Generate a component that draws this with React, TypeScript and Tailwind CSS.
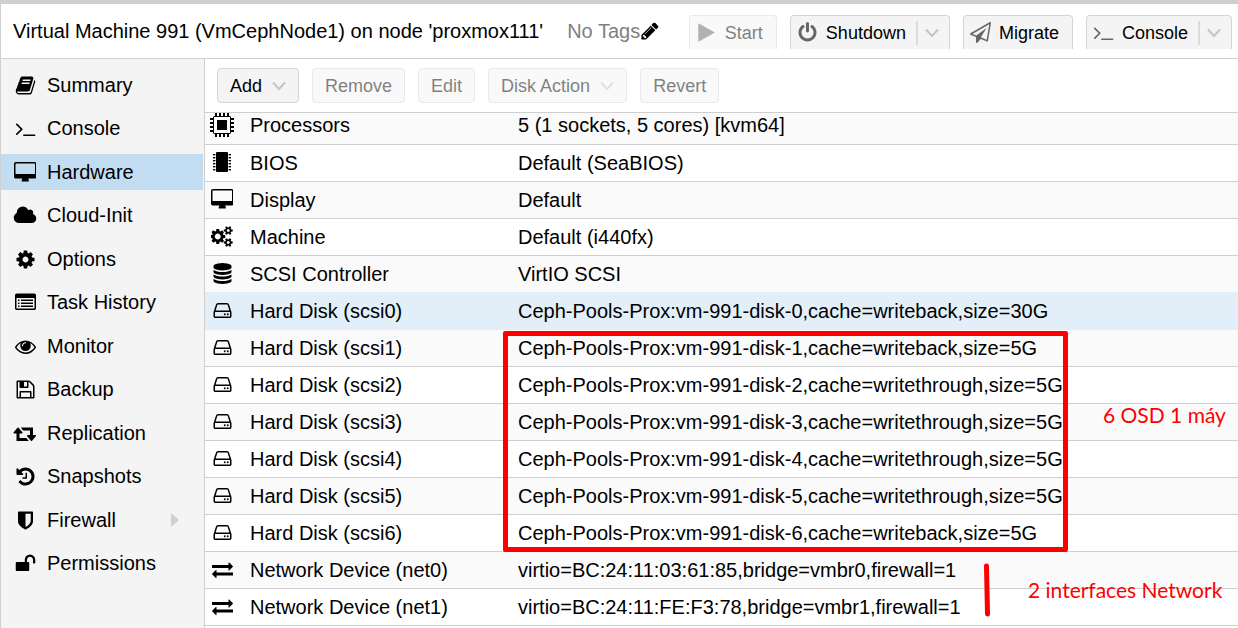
import type { ReactNode } from 'react';

type Glyph = { w: number; d: string };

const glyphs = {
  book: { w: 1792, d: 'M1703 478q40 57 18 129l-275 906q-19 64-76.5 107.5t-122.5 43.5h-923q-77 0-148.5-53.5t-99.5-131.5q-24-67-2-127 0-4 3-27t4-37q1-8-3-21.5t-3-19.5q2-11 8-21t16.5-23.5 16.5-23.5q23-38 45-91.5t30-91.5q3-10 .5-30t-.5-28q3-11 17-28t17-23q21-36 42-92t25-90q1-9-2.5-32t.5-28q4-13 22-30.5t22-22.5q19-26 42.5-84.5t27.5-96.5q1-8-3-25.5t-2-26.5q2-8 9-18t18-23 17-21q8-12 16.5-30.5t15-35 16-36 19.5-32 26.5-23.5 36-11.5 47.5 5.5l-1 3q38-9 51-9h761q74 0 114 56t18 130l-274 906q-36 119-71.5 153.5t-128.5 34.5h-869q-27 0-38 15-11 16-1 43 24 70 144 70h923q29 0 56-15.5t35-41.5l300-987q7-22 5-57 38 15 59 43zm-1064 2q-4 13 2 22.5t20 9.5h608q13 0 25.5-9.5t16.5-22.5l21-64q4-13-2-22.5t-20-9.5h-608q-13 0-25.5 9.5t-16.5 22.5zm-83 256q-4 13 2 22.5t20 9.5h608q13 0 25.5-9.5t16.5-22.5l21-64q4-13-2-22.5t-20-9.5h-608q-13 0-25.5 9.5t-16.5 22.5z' },
  terminal: { w: 1792, d: 'M649 983l-466 466q-10 10-23 10t-23-10l-50-50q-10-10-10-23t10-23l393-393-393-393q-10-10-10-23t10-23l50-50q10-10 23-10t23 10l466 466q10 10 10 23t-10 23zm1079 457v64q0 14-9 23t-23 9h-960q-14 0-23-9t-9-23v-64q0-14 9-23t23-9h960q14 0 23 9t9 23z' },
  desktop: { w: 1920, d: 'M1792 992v-832q0-13-9.5-22.5t-22.5-9.5h-1600q-13 0-22.5 9.5t-9.5 22.5v832q0 13 9.5 22.5t22.5 9.5h1600q13 0 22.5-9.5t9.5-22.5zm128-832v1088q0 66-47 113t-113 47h-544q0 37 16 77.5t32 71 16 43.5q0 26-19 45t-45 19h-512q-26 0-45-19t-19-45q0-14 16-44t32-70 16-78h-544q-66 0-113-47t-47-113v-1088q0-66 47-113t113-47h1600q66 0 113 47t47 113z' },
  cloud: { w: 2048, d: 'M1984 1152q0 159-112.5 271.5t-271.5 112.5h-1088q-185 0-316.5-131.5t-131.5-316.5q0-132 71-241.5t187-163.5q-2-28-2-43 0-212 150-362t362-150q158 0 286.5 88t187.5 230q70-62 166-62 106 0 181 75t75 181q0 75-41 138 129 30 213 134.5t84 239.5z' },
  cog: { w: 1792, d: 'M1152 896q0-106-75-181t-181-75-181 75-75 181 75 181 181 75 181-75 75-181zm512-109v222q0 12-8 23t-20 13l-185 28q-19 54-39 91 35 50 107 138 10 12 10 25t-9 23q-27 37-99 108t-94 71q-12 0-26-9l-138-108q-44 23-91 38-16 136-29 186-7 28-36 28h-222q-14 0-24.5-8.5t-11.5-21.5l-28-184q-49-16-90-37l-141 107q-10 9-25 9-14 0-25-11-126-114-165-168-7-10-7-23 0-12 8-23 15-21 51-66.5t54-70.5q-27-50-41-99l-183-27q-13-2-21-12.5t-8-23.5v-222q0-12 8-23t19-13l186-28q14-46 39-92-40-57-107-138-10-12-10-24 0-10 9-23 26-36 98.5-107.5t94.5-71.5q13 0 26 10l138 107q44-23 91-38 16-136 29-186 7-28 36-28h222q14 0 24.5 8.5t11.5 21.5l28 184q49 16 90 37l142-107q9-9 24-9 13 0 25 10 129 119 165 170 7 8 7 22 0 12-8 23-15 21-51 66.5t-54 70.5q26 50 41 98l183 28q13 2 21 12.5t8 23.5z' },
  list: { w: 1792, d: 'M160 128H1632Q1698 128 1745 175T1792 288V1376Q1792 1442 1745 1489T1632 1536H160Q94 1536 47 1489T0 1376V288Q0 222 47 175T160 128ZM128 512V1376Q128 1408 160 1408H1632Q1664 1408 1664 1376V512ZM256 640H384V768H256ZM512 640H1536V768H512ZM256 896H384V1024H256ZM512 896H1536V1024H512ZM256 1152H384V1280H256ZM512 1152H1536V1280H512Z' },
  eye: { w: 1792, d: 'M1664 960q-152-236-381-353 61 104 61 225 0 185-131.5 316.5t-316.5 131.5-316.5-131.5-131.5-316.5q0-121 61-225-229 117-381 353 133 205 333.5 326.5t434.5 121.5 434.5-121.5 333.5-326.5zm-720-384q0-20-14-34t-34-14q-125 0-214.5 89.5t-89.5 214.5q0 20 14 34t34 14 34-14 14-34q0-86 61-147t147-61q20 0 34-14t14-34zm848 384q0 34-20 69-140 230-376.5 368.5t-499.5 138.5-499.5-139-376.5-368q-20-35-20-69t20-69q140-229 376.5-368t499.5-139 499.5 139 376.5 368q20 35 20 69z' },
  floppy: { w: 1792, d: 'M512 1536h768v-384h-768v384zm896 0h128v-896q0-14-10-38.5t-20-34.5l-281-281q-10-10-34-20t-39-10v416q0 40-28 68t-68 28h-576q-40 0-68-28t-28-68v-416h-128v1280h128v-416q0-40 28-68t68-28h832q40 0 68 28t28 68v416zm-384-928v-320q0-13-9.5-22.5t-22.5-9.5h-192q-13 0-22.5 9.5t-9.5 22.5v320q0 13 9.5 22.5t22.5 9.5h192q13 0 22.5-9.5t9.5-22.5zm640 32v928q0 40-28 68t-68 28h-1344q-40 0-68-28t-28-68v-1344q0-40 28-68t68-28h928q40 0 88 20t76 48l280 280q28 28 48 76t20 88z' },
  retweet: { w: 2176, d: 'M1408 1504q0 13-9.5 22.5t-22.5 9.5h-960q-8 0-13.5-2t-9-7-5.5-8-3-11.5-1-11.5v-600h-192q-26 0-45-19t-19-45q0-24 15-41l320-384q19-22 49-22t49 22l320 384q15 17 15 41 0 26-19 45t-45 19h-192v384h576q16 0 25 11l160 192q7 10 7 21zm640-416q0 24-15 41l-320 384q-20 23-49 23t-49-23l-320-384q-15-17-15-41 0-26 19-45t45-19h192v-384h-576q-16 0-25-12l-160-192q-7-9-7-20 0-13 9.5-22.5t22.5-9.5h960q8 0 13.5 2t9 7 5.5 8 3 11.5 1 11.5v600h192q26 0 45 19t19 45z' },
  history: { w: 1792, d: 'M1664 896q0 156-61 298t-164 245-245 164-298 61q-172 0-327-72.5t-264-204.5q-7-10-6.5-22.5t8.5-20.5l137-138q10-9 25-9 16 2 23 12 73 95 179 147t225 52q104 0 198.5-40.5t163.5-109.5 109.5-163.5 40.5-198.5-40.5-198.5-109.5-163.5-163.5-109.5-198.5-40.5q-98 0-188 35.5t-160 101.5l137 138q31 30 14 69-17 40-59 40h-448q-26 0-45-19t-19-45v-448q0-42 40-59 39-17 69 14l130 129q107-101 244.5-156.5t284.5-55.5q156 0 298 61t245 164 164 245 61 298zm-640-288v448q0 14-9 23t-23 9h-320q-14 0-23-9t-9-23v-64q0-14 9-23t23-9h224v-352q0-14 9-23t23-9h64q14 0 23 9t9 23z' },
  shield: { w: 1792, d: 'M1344 960v-640h-448v1137q119-63 213-137 235-184 235-360zm192-768v768q0 86-33.5 170.5t-83 150-118 127.5-126.5 103-121 77.5-89.5 49.5-42.5 20q-12 6-26 6t-26-6q-16-7-42.5-20t-89.5-49.5-121-77.5-126.5-103-118-127.5-83-150-33.5-170.5v-768q0-26 19-45t45-19h1152q26 0 45 19t19 45z' },
  unlock: { w: 1792, d: 'M1728 576v256q0 26-19 45t-45 19h-64q-26 0-45-19t-19-45v-256q0-106-75-181t-181-75-181 75-75 181v192h96q40 0 68 28t28 68v576q0 40-28 68t-68 28h-960q-40 0-68-28t-28-68v-576q0-40 28-68t68-28h672v-192q0-185 131.5-316.5t316.5-131.5 316.5 131.5 131.5 316.5z' },
  pencil: { w: 1792, d: 'M491 1536l91-91-235-235-91 91v107h128v128h107zm523-928q0-22-22-22-10 0-17 7l-542 542q-7 7-7 17 0 22 22 22 10 0 17-7l542-542q7-7 7-17zm-54-192l416 416-832 832h-416v-416zm683 96q0 53-37 90l-166 166-416-416 166-165q36-38 90-38 53 0 91 38l235 234q37 39 37 91z' },
  play: { w: 1792, d: 'M1576 927l-1328 738q-23 13-39.500 3t-16.500-36v-1472q0-26 16.500-36t39.500 3l1328 738q23 13 23 31t-23 31z' },
  power: { w: 1792, d: 'M1664 896q0 156-61 298t-164 245-245 164-298 61-298-61-245-164-164-245-61-298q0-182 80.5-343t226.5-270q43-32 95.5-25t83.5 50q32 42 24.5 94.5t-49.5 84.5q-98 74-151.5 181t-53.5 228q0 104 40.5 198.5t109.5 163.5 163.5 109.5 198.5 40.5 198.5-40.5 163.5-109.5 109.5-163.5 40.5-198.5q0-121-53.5-228t-151.5-181q-42-32-49.5-84.5t24.5-94.5q31-43 84-50t95 25q146 109 226.5 270t80.5 343zm-640-768v640q0 52-38 90t-90 38-90-38-38-90v-640q0-52 38-90t90-38 90 38 38 90z' },
  plane: { w: 1792, d: 'M1764 11q33 24 27 64l-256 1536q-5 29-32 45-14 8-31 8-11 0-24-5l-527-215-298 327q-18 21-47 21-14 0-23-4-19-7-30-23.5t-11-36.5v-452l-472-193q-37-14-40-55-3-39 32-59l1664-960q35-21 68 2zm-342 1499l221-1323-1434 827 336 137 863-639-478 797z' },
  hdd: { w: 1792, d: 'M1168 1216q0 33-23.5 56.5t-56.5 23.5-56.5-23.5-23.5-56.5 23.5-56.5 56.5-23.5 56.5 23.5 23.5 56.5zm256 0q0 33-23.5 56.5t-56.5 23.5-56.5-23.5-23.5-56.5 23.5-56.5 56.5-23.5 56.5 23.5 23.5 56.5zm112 160v-320q0-13-9.5-22.5t-22.5-9.5h-1216q-13 0-22.5 9.5t-9.5 22.5v320q0 13 9.5 22.5t22.5 9.5h1216q13 0 22.5-9.5t9.5-22.5zm-1230-480h1180l-157-482q-4-13-16-21.5t-26-8.5h-782q-14 0-26 8.5t-16 21.5zm1358 160v320q0 66-47 113t-113 47h-1216q-66 0-113-47t-47-113v-320q0-25 16-75l197-606q17-53 63-86t101-33h782q55 0 101 33t63 86l197 606q16 50 16 75z' },
  exchange: { w: 1792, d: 'M1792 1184v192q0 13-9.5 22.5t-22.5 9.5h-1376v192q0 13-9.5 22.5t-22.5 9.5q-12 0-24-10l-319-320q-9-9-9-22 0-14 9-23l320-320q9-9 23-9 13 0 22.5 9.5t9.5 22.5v192h1376q13 0 22.5 9.5t9.5 22.5zm0-544q0 14-9 23l-320 320q-9 9-23 9-13 0-22.5-9.5t-9.5-22.5v-192h-1376q-13 0-22.5-9.5t-9.5-22.5v-192q0-13 9.5-22.5t22.5-9.5h1376v-192q0-14 9-23t23-9q12 0 24 10l319 319q9 9 9 23z' },
  database: { w: 1792, d: 'M896 768q237 0 443-43t325-127v170q0 69-103 128t-280 93.5-385 34.5-385-34.5-280-93.5-103-128v-170q119 84 325 127t443 43zm0 768q237 0 443-43t325-127v170q0 69-103 128t-280 93.5-385 34.5-385-34.5-280-93.5-103-128v-170q119 84 325 127t443 43zm0-384q237 0 443-43t325-127v170q0 69-103 128t-280 93.5-385 34.5-385-34.5-280-93.5-103-128v-170q119 84 325 127t443 43zm0-1152q208 0 385 34.5t280 93.5 103 128v128q0 69-103 128t-280 93.5-385 34.5-385-34.5-280-93.5-103-128v-128q0-69 103-128t280-93.5 385-34.5z' },
  cogs: { w: 1920, d: 'M832 896q0-106-75-181t-181-75-181 75-75 181 75 181 181 75 181-75 75-181zm768 512q0-52-38-90t-90-38-90 38-38 90q0 53 37.5 90.5t90.5 37.5 90.5-37.5 37.5-90.5zm0-1024q0-52-38-90t-90-38-90 38-38 90q0 53 37.5 90.5t90.5 37.5 90.5-37.5 37.5-90.5zm-384 421v185q0 10-7 19.5t-16 10.5l-155 24q-11 35-32 76 34 48 90 115 7 11 7 20 0 12-7 19-23 30-82.5 89.5t-78.5 59.5q-11 0-21-7l-115-90q-37 19-77 31-11 108-23 155-7 24-30 24h-186q-11 0-20-7.5t-10-17.5l-23-153q-34-10-75-31l-118 89q-7 7-20 7-11 0-21-8-144-133-144-160 0-9 7-19 10-14 41-53t47-61q-23-44-35-82l-152-24q-10-1-17-9.5t-7-19.5v-185q0-10 7-19.5t16-10.5l155-24q11-35 32-76-34-48-90-115-7-11-7-20 0-12 7-20 22-30 82-89t79-59q11 0 21 7l115 90q34-18 77-32 11-108 23-154 7-24 30-24h186q11 0 20 7.5t10 17.5l23 153q34 10 75 31l118-89q8-7 20-7 11 0 21 8 144 133 144 160 0 8-7 19-12 16-42 54t-45 60q23 48 34 82l152 23q10 2 17 10.5t7 19.5zm640 533v140q0 16-149 31-12 27-30 52 51 113 51 138 0 4-4 7-122 71-124 71-8 0-46-47t-52-68q-20 2-30 2t-30-2q-14 21-52 68t-46 47q-2 0-124-71-4-3-4-7 0-25 51-138-18-25-30-52-149-15-149-31v-140q0-16 149-31 13-29 30-52-51-113-51-138 0-4 4-7 4-2 35-20t59-34 30-16q8 0 46 46.5t52 67.5q20-2 30-2t30 2q51-71 92-112l6-2q4 0 124 70 4 3 4 7 0 25-51 138 17 23 30 52 149 15 149 31zm0-1024v140q0 16-149 31-12 27-30 52 51 113 51 138 0 4-4 7-122 71-124 71-8 0-46-47t-52-68q-20 2-30 2t-30-2q-14 21-52 68t-46 47q-2 0-124-71-4-3-4-7 0-25 51-138-18-25-30-52-149-15-149-31v-140q0-16 149-31 13-29 30-52-51-113-51-138 0-4 4-7 4-2 35-20t59-34 30-16q8 0 46 46.5t52 67.5q20-2 30-2t30 2q51-71 92-112l6-2q4 0 124 70 4 3 4 7 0 25-51 138 17 23 30 52 149 15 149 31z' },
} satisfies Record<string, Glyph>;

type IconName = keyof typeof glyphs;

function Icon({ name, className = 'h-[21px]' }: { name: IconName; className?: string }) {
  const g = glyphs[name];
  return (
    <svg viewBox={`0 0 ${g.w} 1792`} fill="currentColor" fillRule="evenodd" aria-hidden="true" className={`w-auto shrink-0 ${className}`}>
      <path d={g.d} />
    </svg>
  );
}

function CpuIcon() {
  const pins = [5, 9, 13, 17];
  return (
    <svg viewBox="0 0 24 24" fill="currentColor" aria-hidden="true" className="size-6 shrink-0">
      <path fillRule="evenodd" d="M4 3H20L21 4V20L20 21H4L3 20V4ZM4 4V20H20V4Z" />
      <rect x="7" y="7" width="10" height="10" />
      {pins.map((p) => (
        <g key={p}>
          <rect x={p} y="0" width="2" height="3" />
          <rect x={p} y="21" width="2" height="3" />
          <rect x="0" y={p} width="3" height="2" />
          <rect x="21" y={p} width="3" height="2" />
        </g>
      ))}
    </svg>
  );
}

function ChipIcon() {
  const pins = [2, 5, 8, 11, 14, 17];
  return (
    <svg viewBox="0 0 18 21" fill="currentColor" aria-hidden="true" className="h-[21px] w-[18px] shrink-0">
      <rect x="3" y="0" width="12" height="20" rx="1" />
      {pins.map((p) => (
        <g key={p}>
          <rect x="0" y={p} width="2.4" height="1.4" />
          <rect x="15.6" y={p} width="2.4" height="1.4" />
        </g>
      ))}
    </svg>
  );
}

function Chevron() {
  return (
    <svg viewBox="0 0 14 10" fill="none" stroke="#c4c4c4" strokeWidth="2" aria-hidden="true" className="h-[10px] w-[14px] shrink-0">
      <path d="M1 1.500L7 8L13 1.500" />
    </svg>
  );
}

const menu: { icon: IconName; label: string; active?: boolean; more?: boolean }[] = [
  { icon: 'book', label: 'Summary' },
  { icon: 'terminal', label: 'Console' },
  { icon: 'desktop', label: 'Hardware', active: true },
  { icon: 'cloud', label: 'Cloud-Init' },
  { icon: 'cog', label: 'Options' },
  { icon: 'list', label: 'Task History' },
  { icon: 'eye', label: 'Monitor' },
  { icon: 'floppy', label: 'Backup' },
  { icon: 'retweet', label: 'Replication' },
  { icon: 'history', label: 'Snapshots' },
  { icon: 'shield', label: 'Firewall', more: true },
  { icon: 'unlock', label: 'Permissions' },
];

const hdd = <Icon name="hdd" />;
const net = <Icon name="exchange" />;

const hardware: { icon: ReactNode; name: string; value: string }[] = [
  { icon: <CpuIcon />, name: 'Processors', value: '5 (1 sockets, 5 cores) [kvm64]' },
  { icon: <ChipIcon />, name: 'BIOS', value: 'Default (SeaBIOS)' },
  { icon: <Icon name="desktop" />, name: 'Display', value: 'Default' },
  { icon: <Icon name="cogs" />, name: 'Machine', value: 'Default (i440fx)' },
  { icon: <Icon name="database" />, name: 'SCSI Controller', value: 'VirtIO SCSI' },
  { icon: hdd, name: 'Hard Disk (scsi0)', value: 'Ceph-Pools-Prox:vm-991-disk-0,cache=writeback,size=30G' },
  { icon: hdd, name: 'Hard Disk (scsi1)', value: 'Ceph-Pools-Prox:vm-991-disk-1,cache=writeback,size=5G' },
  { icon: hdd, name: 'Hard Disk (scsi2)', value: 'Ceph-Pools-Prox:vm-991-disk-2,cache=writethrough,size=5G' },
  { icon: hdd, name: 'Hard Disk (scsi3)', value: 'Ceph-Pools-Prox:vm-991-disk-3,cache=writethrough,size=5G' },
  { icon: hdd, name: 'Hard Disk (scsi4)', value: 'Ceph-Pools-Prox:vm-991-disk-4,cache=writethrough,size=5G' },
  { icon: hdd, name: 'Hard Disk (scsi5)', value: 'Ceph-Pools-Prox:vm-991-disk-5,cache=writethrough,size=5G' },
  { icon: hdd, name: 'Hard Disk (scsi6)', value: 'Ceph-Pools-Prox:vm-991-disk-6,cache=writeback,size=5G' },
  { icon: net, name: 'Network Device (net0)', value: 'virtio=BC:24:11:03:61:85,bridge=vmbr0,firewall=1' },
  { icon: net, name: 'Network Device (net1)', value: 'virtio=BC:24:11:FE:F3:78,bridge=vmbr1,firewall=1' },
];
const selected = 5;

function rowClass(i: number) {
  if (i === selected) return 'border-[#e2eff8] bg-[#e2eff8]';
  if (i === selected - 1) return 'border-[#e2eff8] bg-[#fafafa]';
  return i % 2 === 0 ? 'border-[#cfcfcf] bg-[#fafafa]' : 'border-[#cfcfcf] bg-white';
}

function HeaderButton({ icon, label, split, disabled }: { icon: IconName; label: string; split?: boolean; disabled?: boolean }) {
  return (
    <button
      type="button"
      disabled={disabled}
      className="flex h-[34px] items-center rounded-t-[4px] border border-b-0 border-[#d5d5d5] bg-[#f4f4f4] pr-[13px] pl-[6px] text-lg text-black disabled:opacity-50"
    >
      <span className="flex w-[22px] justify-center text-[#666]">
        <Icon name={icon} />
      </span>
      <span className="ml-[7px]">{label}</span>
      {split && (
        <span className="-mr-[3px] ml-[10px] flex h-6 items-center border-l-2 border-[#dcdcdc] pl-[7px]">
          <Chevron />
        </span>
      )}
    </button>
  );
}

function ToolButton({ label, menu: hasMenu, disabled }: { label: string; menu?: boolean; disabled?: boolean }) {
  return (
    <button
      type="button"
      disabled={disabled}
      className="flex h-[35px] items-center gap-[10px] rounded-[4px] border border-[#d5d5d5] bg-[#f4f4f4] px-3 text-lg text-black disabled:opacity-50"
    >
      {label}
      {hasMenu && <Chevron />}
    </button>
  );
}

export default function App() {
  return (
    <div className="flex min-h-screen flex-col overflow-hidden border-t-4 border-l border-[#cfcfcf] bg-white font-['Liberation_Sans',Arial,sans-serif] text-black">
      <header className="flex h-[55px] items-start border-b border-[#cfcfcf] pr-[6px] pl-3 whitespace-nowrap">
        <h1 className="mt-3 text-[20px] leading-[30px]">Virtual Machine 991 (VmCephNode1) on node 'proxmox111'</h1>
        <button type="button" aria-label="Edit tags" className="mt-3 ml-6 flex items-center text-[20px] leading-[30px] text-[#808080]">
          No Tags
          <Icon name="pencil" className="h-[20px] text-black" />
        </button>
        <div className="mt-[11px] ml-auto flex gap-[13px]">
          <HeaderButton icon="play" label="Start" disabled />
          <HeaderButton icon="power" label="Shutdown" split />
          <HeaderButton icon="plane" label="Migrate" />
          <HeaderButton icon="terminal" label="Console" split />
        </div>
      </header>

      <div className="flex flex-1">
        <nav className="w-[204px] shrink-0 border-r border-[#cfcfcf] bg-[#f4f4f4] pt-2">
          {menu.map((m, i) => (
            <a
              key={m.label}
              href={`#${m.label.toLowerCase()}`}
              aria-current={m.active ? 'page' : undefined}
              className={`mr-px flex h-9 items-center text-[20px] ${i === 0 ? '' : i % 2 ? 'mt-[7px]' : 'mt-2'} ${m.active ? 'bg-[#c2ddf2]' : ''}`}
            >
              <span className="ml-3 flex w-6 justify-center">
                <Icon name={m.icon} />
              </span>
              <span className="ml-[10px]">{m.label}</span>
              {m.more && (
                <svg viewBox="0 0 8 14" fill="#cfcfcf" aria-hidden="true" className="mr-6 ml-auto h-[14px] w-2">
                  <path d="M0 0L8 7L0 14Z" />
                </svg>
              )}
            </a>
          ))}
        </nav>

        <main className="min-w-0 flex-1">
          <div className="flex gap-[13px] border-b border-[#cfcfcf] px-3 pt-[9px] pb-[9px]">
            <ToolButton label="Add" menu />
            <ToolButton label="Remove" disabled />
            <ToolButton label="Edit" disabled />
            <ToolButton label="Disk Action" menu disabled />
            <ToolButton label="Revert" disabled />
          </div>

          <div className="relative overflow-hidden">
            <table className="-mt-[6px] w-full table-fixed border-collapse text-left text-[20px] leading-6 whitespace-nowrap">
              <colgroup>
                <col className="w-[34px]" />
                <col className="w-[279px]" />
                <col />
              </colgroup>
              <tbody>
                {hardware.map((h, i) => (
                  <tr key={h.name} className={`h-[37px] border-b ${rowClass(i)}`}>
                    <td className="p-0">
                      <span className="flex justify-center">{h.icon}</span>
                    </td>
                    <th scope="row" className="p-0 pl-[11px] font-normal">{h.name}</th>
                    <td className="p-0">{h.value}</td>
                  </tr>
                ))}
              </tbody>
            </table>

            <div className="absolute top-[218px] left-[298px] h-[221px] w-[565px] rounded-[2px] border-5 border-[#ff0000]" />
            <svg viewBox="0 0 8 56" aria-hidden="true" className="absolute top-[450px] left-[778px] h-14 w-2">
              <path d="M3.500 3L4.500 51" stroke="#ff0000" strokeWidth="5" strokeLinecap="round" />
            </svg>
            <p className="absolute top-[287px] left-[898px] font-['Lato',sans-serif] text-[21px] leading-[30px] whitespace-nowrap text-[#ff0000]">6 OSD 1 máy</p>
            <p className="absolute top-[462px] left-[823px] font-['Lato',sans-serif] text-[21px] leading-[30px] whitespace-nowrap text-[#ff0000]">2 interfaces Network</p>
          </div>
        </main>
      </div>
    </div>
  );
}
